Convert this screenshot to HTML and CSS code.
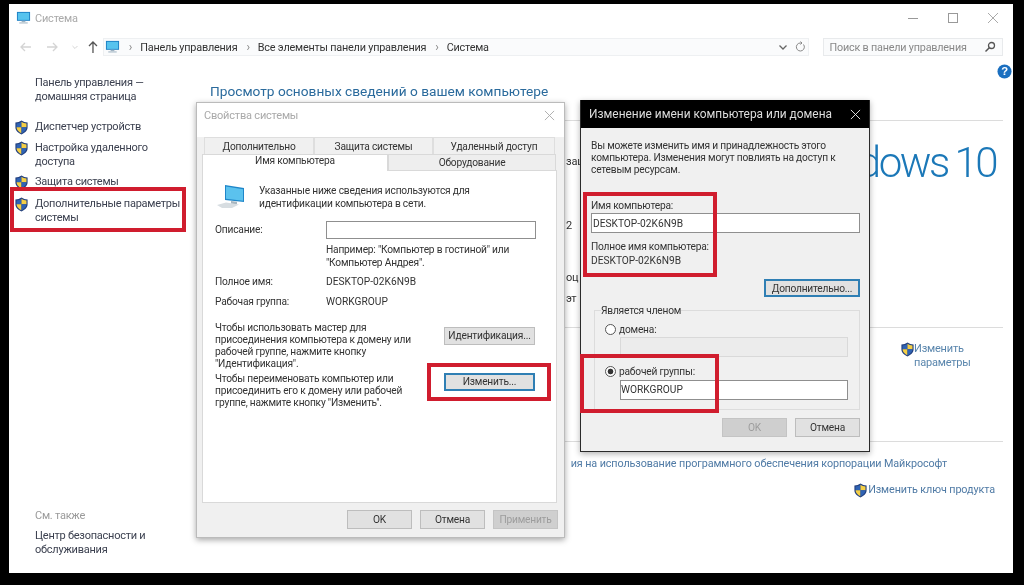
FILE: index.html
```html
<!DOCTYPE html>
<html lang="ru">
<head>
<meta charset="utf-8">
<title>Система</title>
<link rel="stylesheet" href="styles.css">
</head>
<body>
<svg class="defs" width="0" height="0">
  <symbol id="shield" viewBox="0 0 16 16">
    <path d="M8 .6c2 1.400 4 2 6.500 2v5.200c0 3.600-2.600 6-6.500 7.600C4.100 13.800 1.500 11.400 1.500 7.800V2.600C4 2.600 6 2 8 .6z" fill="#23407e"/>
    <path d="M8 1.800v6H2.700V3.700C4.700 3.600 6.400 3 8 1.800z" fill="#2f63b4"/>
    <path d="M8 1.800c1.600 1.200 3.300 1.800 5.300 1.900v4.100H8z" fill="#f5cf45"/>
    <path d="M2.700 7.800H8v6.300c-3-1.300-5.100-3.200-5.300-6.300z" fill="#f5cf45"/>
    <path d="M13.300 7.800H8v6.300c3-1.300 5.100-3.200 5.300-6.300z" fill="#2f63b4"/>
  </symbol>
  <symbol id="pc" viewBox="0 0 16 14">
    <rect x="1" y=".5" width="14" height="9.500" fill="#1d80c4"/>
    <rect x="2" y="1.500" width="12" height="7.500" fill="#56c3ee"/>
    <rect x="6" y="10" width="4" height="1.500" fill="#9fb3c2"/>
    <rect x="3.500" y="11.500" width="9" height="1.500" fill="#b9c7d2"/>
  </symbol>
</svg>

<div class="stage">
  <div class="window">
    <header class="titlebar">
      <svg class="title-icon"><use href="#pc"/></svg>
      <span class="title-text">Система</span>
      <div class="controls">
        <svg class="ctl" viewBox="0 0 12 12"><path d="M1 6.500h10" stroke="#999" fill="none"/></svg>
        <svg class="ctl" viewBox="0 0 12 12"><rect x="1.500" y="1.500" width="9" height="9" stroke="#999" fill="none"/></svg>
        <svg class="ctl" viewBox="0 0 12 12"><path d="M1 1l10 10M11 1L1 11" stroke="#aaa" fill="none"/></svg>
      </div>
    </header>

    <div class="addressbar">
      <svg class="nav" viewBox="0 0 14 14"><path d="M12 7H2M6 3L2 7l4 4" stroke="#d4d4d4" stroke-width="1.300" fill="none"/></svg>
      <svg class="nav" viewBox="0 0 14 14"><path d="M2 7h10M8 3l4 4-4 4" stroke="#d4d4d4" stroke-width="1.300" fill="none"/></svg>
      <svg class="nav-small" viewBox="0 0 8 14"><path d="M1.500 6l2.500 2.500L6.500 6" stroke="#d4d4d4" fill="none"/></svg>
      <svg class="nav up" viewBox="0 0 14 14"><path d="M7 13V2M3 6l4-4 4 4" stroke="#555" stroke-width="1.300" fill="none"/></svg>
      <div class="crumbs">
        <svg class="crumb-icon"><use href="#pc"/></svg>
        <span class="sep">›</span><span>Панель управления</span>
        <span class="sep">›</span><span>Все элементы панели управления</span>
        <span class="sep">›</span><span>Система</span>
        <svg class="chev" viewBox="0 0 10 10"><path d="M1.500 3.500L5 7l3.500-3.500" stroke="#666" stroke-width="1.300" fill="none"/></svg>
        <svg class="refresh" viewBox="0 0 12 12"><path d="M9.500 3.500A4 4 0 1 1 6 2H8M6.500 .5L8 2 6.500 3.500" stroke="#888" fill="none"/></svg>
      </div>
      <div class="search">
        <span>Поиск в панели управления</span>
        <svg class="glass" viewBox="0 0 12 12"><circle cx="7.500" cy="4.500" r="3" stroke="#555" stroke-width="1.300" fill="none"/><path d="M5.300 6.700L1.500 10.500" stroke="#555" stroke-width="1.500"/></svg>
      </div>
    </div>

    <div class="main">
      <nav class="sidebar">
        <a class="home">Панель управления —<br>домашняя страница</a>
        <ul class="tasks">
          <li class="task t1"><svg class="shield"><use href="#shield"/></svg><span>Диспетчер устройств</span></li>
          <li class="task t2"><svg class="shield"><use href="#shield"/></svg><span>Настройка удаленного доступа</span></li>
          <li class="task t3"><svg class="shield"><use href="#shield"/></svg><span>Защита системы</span></li>
          <li class="task t4"><svg class="shield"><use href="#shield"/></svg><span>Дополнительные параметры системы</span></li>
        </ul>
        <div class="see">
          <div class="see-title">См. также</div>
          <a class="see-link">Центр безопасности и обслуживания</a>
        </div>
      </nav>

      <section class="content">
        <div class="heading-row">
          <h1>Просмотр основных сведений о вашем компьютере</h1>
          <svg class="help" viewBox="0 0 16 16"><circle cx="8" cy="8" r="7.500" fill="#1a6fc0"/><text x="8" y="12" text-anchor="middle" class="help-q">?</text></svg>
        </div>
        <div class="block block-edition">
          <p class="frag f1">зац</p>
          <p class="frag f2">2</p>
          <p class="frag f3">оц</p>
          <p class="frag f4">эт</p>
          <div class="logo">dows 10</div>
        </div>
        <div class="block block-name">
          <a class="change"><svg class="shield"><use href="#shield"/></svg><span>Изменить<br>параметры</span></a>
        </div>
        <div class="block block-key">
          <a class="license">ия на использование программного обеспечения корпорации Майкрософт</a>
          <a class="key"><svg class="shield"><use href="#shield"/></svg><span>Изменить ключ продукта</span></a>
        </div>
      </section>
    </div>
  </div>

  <div class="dialog props">
    <div class="props-title"><span>Свойства системы</span>
      <svg class="x" viewBox="0 0 12 12"><path d="M1 1l10 10M11 1L1 11" stroke="#aaa" fill="none"/></svg></div>
    <div class="tabs back-tabs">
      <div class="tab tb1">Дополнительно</div>
      <div class="tab tb2">Защита системы</div>
      <div class="tab tb3">Удаленный доступ</div>
    </div>
    <div class="tabs front-tabs">
      <div class="tab active">Имя компьютера</div>
      <div class="tab inactive">Оборудование</div>
    </div>
    <div class="panel">
      <div class="intro">
        <svg class="big-pc" viewBox="0 0 28 25">
          <path d="M8 1l19 3v14L8 16z" fill="#1f86c9"/>
          <path d="M9 2.500l17 2.700v11.500L9 14.800z" fill="#5bc2ee"/>
          <path d="M14 17l6 .7v2.500l-6-.4z" fill="#a8b6c0"/>
          <path d="M0 21l9-2.500 13 2-7 3.500H5z" fill="#d7dde1"/>
        </svg>
        <p>Указанные ниже сведения используются для идентификации компьютера в сети.</p>
      </div>
      <div class="form-row desc"><span>Описание:</span><div class="input"></div></div>
      <p class="example">Например: "Компьютер в гостиной" или "Компьютер Андрея".</p>
      <div class="form-row info i1"><span>Полное имя:</span><span class="latin">DESKTOP-02K6N9B</span></div>
      <div class="form-row info i2"><span>Рабочая группа:</span><span class="latin">WORKGROUP</span></div>
      <div class="action a1"><p>Чтобы использовать мастер для присоединения компьютера к домену или рабочей группе, нажмите кнопку "Идентификация".</p><button class="btn wide">Идентификация...</button></div>
      <div class="action a2"><p>Чтобы переименовать компьютер или присоединить его к домену или рабочей группе, нажмите кнопку "Изменить".</p><button class="btn wide focus">Изменить...</button></div>
    </div>
    <div class="footer">
      <button class="btn">OK</button>
      <button class="btn">Отмена</button>
      <button class="btn off">Применить</button>
    </div>
  </div>

  <div class="dialog rename">
    <div class="rename-title"><span>Изменение имени компьютера или домена</span>
      <svg class="x" viewBox="0 0 12 12"><path d="M1 1l10 10M11 1L1 11" stroke="#eee" fill="none"/></svg></div>
    <div class="rename-body">
      <p class="lead">Вы можете изменить имя и принадлежность этого компьютера. Изменения могут повлиять на доступ к сетевым ресурсам.</p>
      <label class="lbl name-lbl">Имя компьютера:</label>
      <div class="input name-input latin">DESKTOP-02K6N9B</div>
      <div class="lbl full-lbl">Полное имя компьютера:</div>
      <div class="lbl full-val latin">DESKTOP-02K6N9B</div>
      <div class="more-row"><button class="btn more focus">Дополнительно...</button></div>
      <fieldset class="member">
        <legend>Является членом</legend>
        <div class="radio-row"><span class="radio"></span><span>домена:</span></div>
        <div class="input domain"></div>
        <div class="radio-row r2"><span class="radio on"></span><span>рабочей группы:</span></div>
        <div class="input group latin">WORKGROUP</div>
      </fieldset>
      <div class="rename-foot">
        <button class="btn off">OK</button>
        <button class="btn">Отмена</button>
      </div>
    </div>
  </div>

  <div class="mark m1"></div>
  <div class="mark m2"></div>
  <div class="mark m3"></div>
  <div class="mark m4"></div>
</div>
</body>
</html>
```
FILE: styles.css
```css
* { box-sizing: border-box; }
html, body { margin: 0; height: 100%; background: #000; overflow: hidden; }
body { font-family: Roboto, "Noto Sans", "Liberation Sans", sans-serif; font-size: 10.200px; letter-spacing: -.2px; color: #333; }
p, h1, ul { margin: 0; padding: 0; list-style: none; }
.defs { position: absolute; }
.latin { letter-spacing: 0; }
.stage { position: relative; width: 1024px; height: 585px; padding: 4px 11px 12px 9px; filter: blur(.4px); }

.window { height: 569px; background: #fff; display: flex; flex-direction: column; }

.titlebar { height: 28px; display: flex; align-items: center; padding: 0 0 0 7px; }
.title-icon { width: 15px; height: 14px; margin-right: 4px; }
.title-text { color: #a9a9a9; font-size: 11px; }
.controls { margin-left: auto; display: flex; gap: 28px; padding-right: 14px; }
.ctl { width: 12px; height: 12px; display: block; }

.addressbar { height: 30px; display: flex; align-items: center; padding: 0 10px 0 10px; }
.nav { width: 14px; height: 14px; margin-right: 12px; }
.nav-small { width: 8px; height: 14px; margin-right: 7px; }
.nav.up { margin-right: 3px; }
.crumbs { width: 708px; height: 18px; background: #fafbfc; border: 1px solid #eef0f2; display: flex; align-items: center; font-size: 10.850px; color: #333; padding-left: 1px; }
.crumb-icon { width: 15px; height: 14px; }
.sep { color: #888; font-size: 12px; margin: 0 8px 0 9px; }
.chev { width: 10px; height: 10px; margin-left: auto; }
.refresh { width: 12px; height: 12px; margin: 0 2px 0 6px; }
.search { width: 181px; height: 18px; margin-left: 14px; background: #fafbfc; border: 1px solid #e8eaec; display: flex; align-items: center; justify-content: space-between; padding: 0 6px 0 6px; color: #888; font-size: 10.800px; }
.glass { width: 12px; height: 12px; }

.main { flex: 1; display: flex; min-height: 0; }

.sidebar { width: 201px; padding: 14px 0 0 5px; display: flex; flex-direction: column; font-size: 11px; letter-spacing: -.25px; line-height: 14px; color: #3c4150; }
.home { display: block; padding-left: 21px; }
.tasks { margin-top: 16px; }
.task { display: flex; gap: 6px; align-items: flex-start; }
.task.t2 { margin-top: 6px; }
.task.t3 { margin-top: 6px; }
.task.t4 { margin-top: 7px; }
.task span { width: 152px; }
.shield { width: 15px; height: 15px; flex: none; }
.see { margin-top: auto; padding: 0 0 16px 21px; }
.see-title { color: #9a9a9a; margin-bottom: 6px; }
.see-link { display: block; width: 120px; }

.content { flex: 1; padding-right: 10px; min-width: 0; }
.heading-row { height: 58px; position: relative; }
h1 { font-weight: 400; font-size: 13.700px; letter-spacing: 0; color: #2a6a9c; padding-top: 21px; line-height: 17px; }
.help { position: absolute; right: -9px; top: 2px; width: 15px; height: 15px; }
.help-q { font: 700 12px "Liberation Sans", sans-serif; fill: #fff; }

.block { border-top: 1px solid #dcdcdc; position: relative; }
.block-edition { height: 207px; overflow: hidden; padding-left: 356px; }
.frag { color: #333; white-space: nowrap; font-size: 11px; line-height: 14px; }
.f1 { margin-top: 34px; }
.f2 { margin-top: 50px; }
.f3 { margin-top: 38px; }
.f4 { margin-top: 7px; }
.logo { position: absolute; right: 7px; top: 13px; font-size: 42px; font-weight: 300; color: #1b78b8; line-height: 58px; white-space: nowrap; letter-spacing: -2.500px; word-spacing: -1px; }
.block-name { height: 114px; display: flex; justify-content: flex-end; padding: 14px 33px 0 0; }
.change { display: block; color: #5a86ad; font-size: 11px; line-height: 14px; width: 56px; position: relative; white-space: nowrap; }
.change .shield { position: absolute; left: -14px; top: 0; }
.block-key { padding: 15px 0 0 0; display: flex; flex-direction: column; align-items: flex-end; color: #4f7aa5; font-size: 10.800px; letter-spacing: -.1px; line-height: 14px; }
.license { margin-right: 56px; white-space: nowrap; }
.key { display: flex; margin-right: 8px; margin-top: 12px; }

.dialog { position: absolute; background: #f0f0f0; display: flex; flex-direction: column; }
.props { left: 196px; top: 102px; width: 369px; height: 436px; border: 1px solid #bbb; box-shadow: 0 2px 6px rgba(0,0,0,.35); }
.props-title { height: 34px; background: #fff; display: flex; align-items: center; justify-content: space-between; padding: 0 9px 9px 7px; color: #a9a9a9; flex: none; font-size: 11px; }
.x { width: 11px; height: 11px; }
.tabs { display: flex; flex: none; }
.back-tabs { height: 17px; padding-left: 7px; }
.tab { text-align: center; color: #333; }
.back-tabs .tab { background: #f0f0f0; border: 1px solid #dedede; border-bottom: 0; line-height: 17px; }
.tb1 { width: 110px; }
.tb2 { width: 119px; }
.tb3 { width: 122px; }
.front-tabs { height: 17px; padding-left: 5px; position: relative; z-index: 1; margin-bottom: -1px; }
.active { width: 186px; background: #fff; border: 1px solid #d9d9d9; border-bottom: 0; line-height: 12px; padding-bottom: 4px; }
.inactive { width: 168px; background: #eee; border: 1px solid #d9d9d9; line-height: 16px; }
.panel { margin: 0 7px 0 5px; width: 355px; height: 333px; background: #fff; border: 1px solid #d9d9d9; padding: 0 0 0 12px; line-height: 12.500px; flex: none; }
.intro { display: flex; gap: 14px; padding: 13px 0 0 2px; }
.big-pc { width: 28px; height: 25px; flex: none; }
.intro p { width: 240px; line-height: 13px; }
.form-row { display: grid; grid-template-columns: 111px 1fr; align-items: center; }
.desc { margin-top: 11px; }
.input { height: 18px; background: #fff; border: 1px solid #8f8f8f; }
.desc .input { width: 210px; }
.example { margin: 4px 0 0 111px; width: 225px; line-height: 13px; }
.i1 { margin-top: 7px; }
.i2 { margin-top: 7px; }
.action { display: flex; align-items: flex-start; justify-content: space-between; width: 320px; }
.action p { width: 200px; line-height: 12px; }
.a1 { margin-top: 14px; height: 51px; }
.a1 .btn { margin-top: 5px; }
.btn { font: inherit; letter-spacing: inherit; color: #333; width: 65px; height: 19px; padding: 0; background: #e1e1e1; border: 1px solid #bdbdbd; flex: none; }
.wide { width: 91px; height: 18px; }
.focus { border: 2px solid #2f7fb4; background: #e1e1e1; }
.off { background: #cfcfcf; border-color: #c4c4c4; color: #9d9d9d; }
.footer { display: flex; justify-content: flex-end; gap: 8px; padding: 7px 6px 0 0; }

.rename { left: 580px; top: 100px; width: 290px; height: 352px; border: 1px solid #2a2a2a; border-top: 0; box-shadow: 0 2px 6px rgba(0,0,0,.3); }
.rename-title { height: 28px; background: #000; color: #ddd; display: flex; align-items: center; justify-content: space-between; padding: 0 8px; flex: none; font-size: 11.900px; letter-spacing: 0; }
.rename-body { padding: 12px 9px 0 10px; flex: 1; }
.lead { line-height: 12px; width: 250px; }
.lbl { display: block; line-height: 13px; }
.name-lbl { margin-top: 23px; }
.name-input { height: 20px; margin-top: 1px; line-height: 19px; padding-left: 1px; }
.full-lbl { margin-top: 7px; }
.full-val { margin-top: 1px; }
.more-row { display: flex; justify-content: flex-end; margin-top: 12px; }
.more { width: 96px; height: 18px; }
.member { margin: 7px 0 0 3px; padding: 0 0 0 10px; border: 1px solid #dcdcdc; height: 106px; }
.member legend { padding: 0; margin-left: -4px; line-height: 13px; }
.radio-row { display: flex; align-items: center; gap: 3px; height: 14px; margin-top: 5px; }
.radio { width: 11px; height: 11px; border-radius: 50%; border: 1px solid #555; background: #fff; flex: none; }
.radio.on { background: radial-gradient(circle, #333 0 2.500px, #fff 3.200px); }
.domain { margin: 1px 0 0 15px; width: 228px; height: 20px; background: #ececec; border-color: #d9d9d9; }
.r2 { margin-top: 7px; }
.group { margin: 2px 0 0 15px; width: 228px; height: 20px; line-height: 17px; padding-left: 0; }
.rename-foot { display: flex; justify-content: flex-end; gap: 8px; margin-top: 8px; }

.mark { position: absolute; border: 4px solid #d01d2e; pointer-events: none; }
.m1 { left: 10px; top: 187px; width: 176px; height: 45px; }
.m2 { left: 427px; top: 363px; width: 124px; height: 38px; }
.m3 { left: 583px; top: 192px; width: 134px; height: 85px; }
.m4 { left: 580px; top: 354px; width: 139px; height: 59px; }
```
